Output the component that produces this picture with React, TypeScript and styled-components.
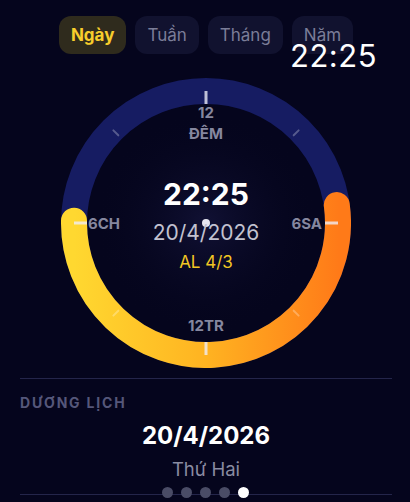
import styled, { createGlobalStyle } from "styled-components";

const GlobalStyle = createGlobalStyle`
  html, body {
    margin: 0;
    padding: 0;
    background: #05051d;
  }
  body {
    font-family: Inter, "Noto Sans", sans-serif;
    color: #fff;
  }
`;

const tabs = ["Ngày", "Tuần", "Tháng", "Năm"];
const dots = [0, 1, 2, 3, 4];

const C = 145;
const R = 132;

const polar = (deg: number, r: number) => {
  const a = (deg * Math.PI) / 180;
  return [C + r * Math.cos(a), C + r * Math.sin(a)];
};

// daylight arc: sunrise (right, a little above horizontal) -> noon (bottom) -> sunset (left)
const sunrise = polar(-7.8, R);
const sunset = polar(181, R);
const dayArc = `M ${sunrise[0]} ${sunrise[1]} A ${R} ${R} 0 1 1 ${sunset[0]} ${sunset[1]}`;

const Dial = () => (
  <svg width="290" height="290" viewBox="0 0 290 290">
    <defs>
      <linearGradient id="day" gradientUnits="userSpaceOnUse" x1="13" y1="0" x2="278" y2="0">
        <stop offset="0" stopColor="#ffd830" />
        <stop offset="0.5" stopColor="#ffb321" />
        <stop offset="1" stopColor="#ff7a18" />
      </linearGradient>
      <radialGradient id="glow" cx="0.5" cy="0.5" r="0.5">
        <stop offset="0" stopColor="#14143a" stopOpacity="0.8" />
        <stop offset="1" stopColor="#05051d" stopOpacity="0" />
      </radialGradient>
    </defs>
    <circle cx={C} cy={C} r={112} fill="url(#glow)" />
    <circle cx={C} cy={C} r={R} fill="none" stroke="#161c62" strokeWidth="26" />
    <path d={dayArc} fill="none" stroke="url(#day)" strokeWidth="26" strokeLinecap="round" />
    {[45, 135, 225, 315].map((d) => {
      const [x1, y1] = polar(d, 124);
      const [x2, y2] = polar(d, 131);
      return (
        <line key={d} x1={x1} y1={y1} x2={x2} y2={y2} stroke="rgba(255,255,255,0.28)" strokeWidth="2" strokeLinecap="round" />
      );
    })}
    {[0, 90, 180, 270].map((d) => {
      const [x1, y1] = polar(d, 119);
      const [x2, y2] = polar(d, 132);
      return (
        <line key={d} x1={x1} y1={y1} x2={x2} y2={y2} stroke="rgba(240,238,250,0.78)" strokeWidth="3" />
      );
    })}
    <g fill="#85879f" fontFamily="Inter, sans-serif" fontWeight="700" fontSize="15">
      <text x={C} y="34" textAnchor="middle" dominantBaseline="central">12</text>
      <text x={C} y="55" textAnchor="middle" dominantBaseline="central">ĐÊM</text>
      <text x="27" y={C} textAnchor="start" dominantBaseline="central">6CH</text>
      <text x="261" y={C} textAnchor="end" dominantBaseline="central">6SA</text>
      <text x={C} y="247" textAnchor="middle" dominantBaseline="central">12TR</text>
    </g>
    <circle cx={C} cy={C} r="4" fill="#e6e6f0" />
  </svg>
);

export default function App() {
  return (
    <>
      <GlobalStyle />
      <Screen>
        <StatusTime>22:25</StatusTime>
        <TabBar>
          {tabs.map((t, i) => (
            <Tab key={t} $active={i === 0}>
              {t}
            </Tab>
          ))}
        </TabBar>

        <DialWrap>
          <Dial />
          <CenterInfo>
            <BigTime>22:25</BigTime>
            <CenterDate>20/4/2026</CenterDate>
            <Lunar>AL 4/3</Lunar>
          </CenterInfo>
        </DialWrap>

        <Section>
          <SectionTitle>DƯƠNG LỊCH</SectionTitle>
          <SolarDate>20/4/2026</SolarDate>
          <Weekday>Thứ Hai</Weekday>
        </Section>

        <Pager>
          {dots.map((d) => (
            <Dot key={d} $active={d === 4} />
          ))}
        </Pager>
      </Screen>
    </>
  );
}

const Screen = styled.div`
  position: relative;
  width: 410px;
  height: 502px;
  overflow: hidden;
  background: #05051d;
`;

const StatusTime = styled.div`
  position: absolute;
  top: 35px;
  right: 33px;
  font-size: 31px;
  line-height: 42px;
  font-weight: 400;
  color: #fff;
  letter-spacing: 0.5px;
`;

const TabBar = styled.div`
  display: flex;
  justify-content: center;
  gap: 9px;
  padding-top: 16px;
  padding-left: 2px;
`;

const Tab = styled.div<{ $active?: boolean }>`
  height: 38px;
  padding: 0 12px;
  display: flex;
  align-items: center;
  border-radius: 12px;
  font-size: 17px;
  font-weight: ${(p) => (p.$active ? 700 : 400)};
  color: ${(p) => (p.$active ? "#f7cd2c" : "#7b7d98")};
  background: ${(p) => (p.$active ? "#2f2b1d" : "#11122f")};
`;

const DialWrap = styled.div`
  position: relative;
  width: 290px;
  height: 290px;
  margin: 24px 0 0 61px;

  svg {
    display: block;
  }
`;

const CenterInfo = styled.div`
  position: absolute;
  top: 96px;
  left: 0;
  right: 0;
  display: flex;
  flex-direction: column;
  align-items: center;
`;

const BigTime = styled.div`
  font-size: 30px;
  line-height: 40px;
  font-weight: 700;
  color: #fff;
`;

const CenterDate = styled.div`
  margin-top: 4px;
  font-size: 21px;
  line-height: 30px;
  color: #c2c2d0;
`;

const Lunar = styled.div`
  margin-top: 2px;
  font-size: 17px;
  line-height: 24px;
  color: #f2c623;
`;

const Section = styled.div`
  margin: 10px 18px 0 20px;
  border-top: 1px solid #24254a;
  border-bottom: 1px solid #24254a;
  display: flex;
  flex-direction: column;
  align-items: center;
  padding: 15px 0 12px;
`;

const SectionTitle = styled.div`
  align-self: flex-start;
  font-size: 14px;
  line-height: 18px;
  font-weight: 700;
  letter-spacing: 1.8px;
  color: #55577a;
`;

const SolarDate = styled.div`
  margin-top: 9px;
  font-size: 24px;
  line-height: 30px;
  font-weight: 700;
  color: #fff;
`;

const Weekday = styled.div`
  margin-top: 5px;
  font-size: 18.5px;
  line-height: 26px;
  color: #8a8ca2;
`;

const Pager = styled.div`
  position: absolute;
  left: 0;
  right: 0;
  top: 487px;
  display: flex;
  justify-content: center;
  gap: 8px;
`;

const Dot = styled.div<{ $active?: boolean }>`
  width: 11px;
  height: 11px;
  border-radius: 50%;
  background: ${(p) => (p.$active ? "#ffffff" : "#4a4c66")};
`;
